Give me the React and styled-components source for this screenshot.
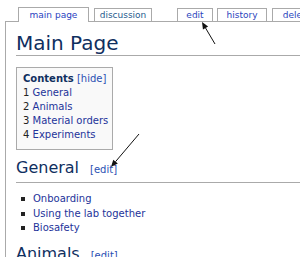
import React from "react";
import styled, { createGlobalStyle } from "styled-components";

const Global = createGlobalStyle`
  html, body { margin: 0; padding: 0; background: #fff; overflow: hidden; }
  body { font-family: "DejaVu Sans", Verdana, sans-serif; }
`;

const Page = styled.div`
  position: relative;
  box-sizing: border-box;
  min-height: 100vh;
  padding: 7px 0 0 5px;
`;

const TabBar = styled.div`
  position: relative;
  z-index: 1;
  display: flex;
  align-items: flex-end;
  height: 15px;
  padding-left: 13px;
  margin-bottom: -1px;
`;

const Tab = styled.a`
  box-sizing: border-box;
  flex: none;
  display: flex;
  align-items: center;
  justify-content: center;
  width: ${(p) => p.$w}px;
  height: ${(p) => (p.$active ? 15 : 13)}px;
  margin-bottom: ${(p) => (p.$active ? 0 : 1)}px;
  margin-right: ${(p) => p.$gap || 0}px;
  border: 1px solid #aaa;
  border-bottom: none;
  background: #fff;
  font-size: 9px;
  line-height: 1;
  color: ${(p) => p.$color || "#2a45bd"};
  text-decoration: none;
  white-space: nowrap;
  overflow: hidden;
`;

const Content = styled.div`
  box-sizing: border-box;
  min-height: calc(100vh - 21px);
  border-left: 1px solid #aaa;
  border-top: 1px solid #aaa;
  padding: 9px 0 0 10px;
`;

const Title = styled.h1`
  margin: 0 0 11px;
  font-size: 20px;
  line-height: 24px;
  font-weight: normal;
  color: #0f2f5f;
  padding-bottom: 0;
  border-bottom: 1px solid #aaa;
`;

const Toc = styled.div`
  display: inline-block;
  box-sizing: border-box;
  border: 1px solid #aaa;
  background: #f9f9f9;
  padding: 4px 4px 7px 6px;
  font-size: 10px;
  line-height: 14px;
`;

const TocTitle = styled.div`
  white-space: nowrap;
  strong {
    color: #0f2f5f;
    font-weight: bold;
  }
`;

const Small = styled.a`
  font-size: ${(p) => p.$size || 10}px;
  color: #2a4fb3;
  text-decoration: none;
  margin-left: ${(p) => p.$ml || 0}px;
`;

const TocItem = styled.div`
  white-space: nowrap;
  color: #222;
`;

const TocLink = styled.a`
  color: #23339a;
  text-decoration: none;
`;

const Section = styled.h2`
  margin: 8px 0 0;
  font-size: 16px;
  line-height: 20px;
  font-weight: normal;
  color: #0f2f5f;
  padding-bottom: 2px;
  border-bottom: 1px solid #aaa;
  white-space: nowrap;
`;

const List = styled.ul`
  list-style: none;
  margin: 9px 0 0;
  padding: 0 0 0 5px;
  font-size: 10px;
  line-height: 14.5px;
`;

const Item = styled.li`
  display: flex;
  align-items: center;
  gap: 8px;
  &::before {
    content: "";
    width: 4px;
    height: 4px;
    background: #222;
    flex: none;
  }
`;

const ItemLink = styled.a`
  color: #23339a;
  text-decoration: none;
`;

const Overlay = styled.svg`
  position: absolute;
  left: 0;
  top: 0;
  width: 300px;
  height: 257px;
  pointer-events: none;
  z-index: 5;
`;

function Arrow({ x1, y1, x2, y2 }) {
  const dx = x2 - x1;
  const dy = y2 - y1;
  const len = Math.hypot(dx, dy);
  const ux = dx / len;
  const uy = dy / len;
  const hl = 7;
  const hw = 3;
  const bx = x2 - ux * hl;
  const by = y2 - uy * hl;
  const p1 = `${x2},${y2}`;
  const p2 = `${bx - uy * hw},${by + ux * hw}`;
  const p3 = `${bx + uy * hw},${by - ux * hw}`;
  return (
    <g>
      <line x1={x1} y1={y1} x2={bx} y2={by} stroke="#111" strokeWidth="1" />
      <polygon points={`${p1} ${p2} ${p3}`} fill="#111" />
    </g>
  );
}

const tabs = [
  { label: "main page", w: 71, gap: 5, active: true, color: "#2a3fbf" },
  { label: "discussion", w: 58, gap: 25, color: "#1f5c8e" },
  { label: "edit", w: 36, gap: 4 },
  { label: "history", w: 50, gap: 5 },
  { label: "delete", w: 50, gap: 0 },
];

const toc = ["General", "Animals", "Material orders", "Experiments"];
const general = ["Onboarding", "Using the lab together", "Biosafety"];

export default function App() {
  return (
    <>
      <Global />
      <Page>
        <TabBar>
          {tabs.map((t) => (
            <Tab key={t.label} $w={t.w} $gap={t.gap} $active={t.active} $color={t.color}>
              {t.label}
            </Tab>
          ))}
        </TabBar>
        <Content>
          <Title>Main Page</Title>
          <Toc>
            <TocTitle>
              <strong>Contents</strong> <Small>[hide]</Small>
            </TocTitle>
            {toc.map((t, i) => (
              <TocItem key={t}>
                {i + 1} <TocLink>{t}</TocLink>
              </TocItem>
            ))}
          </Toc>
          <Section>
            General<Small $ml={11}>[edit]</Small>
          </Section>
          <List>
            {general.map((g) => (
              <Item key={g}>
                <ItemLink>{g}</ItemLink>
              </Item>
            ))}
          </List>
          <Section>
            Animals<Small $ml={11}>[edit]</Small>
          </Section>
        </Content>
        <Overlay viewBox="0 0 300 257">
          <Arrow x1={215} y1={44} x2={202} y2={22} />
          <Arrow x1={139} y1={134} x2={111} y2={167} />
        </Overlay>
      </Page>
    </>
  );
}
